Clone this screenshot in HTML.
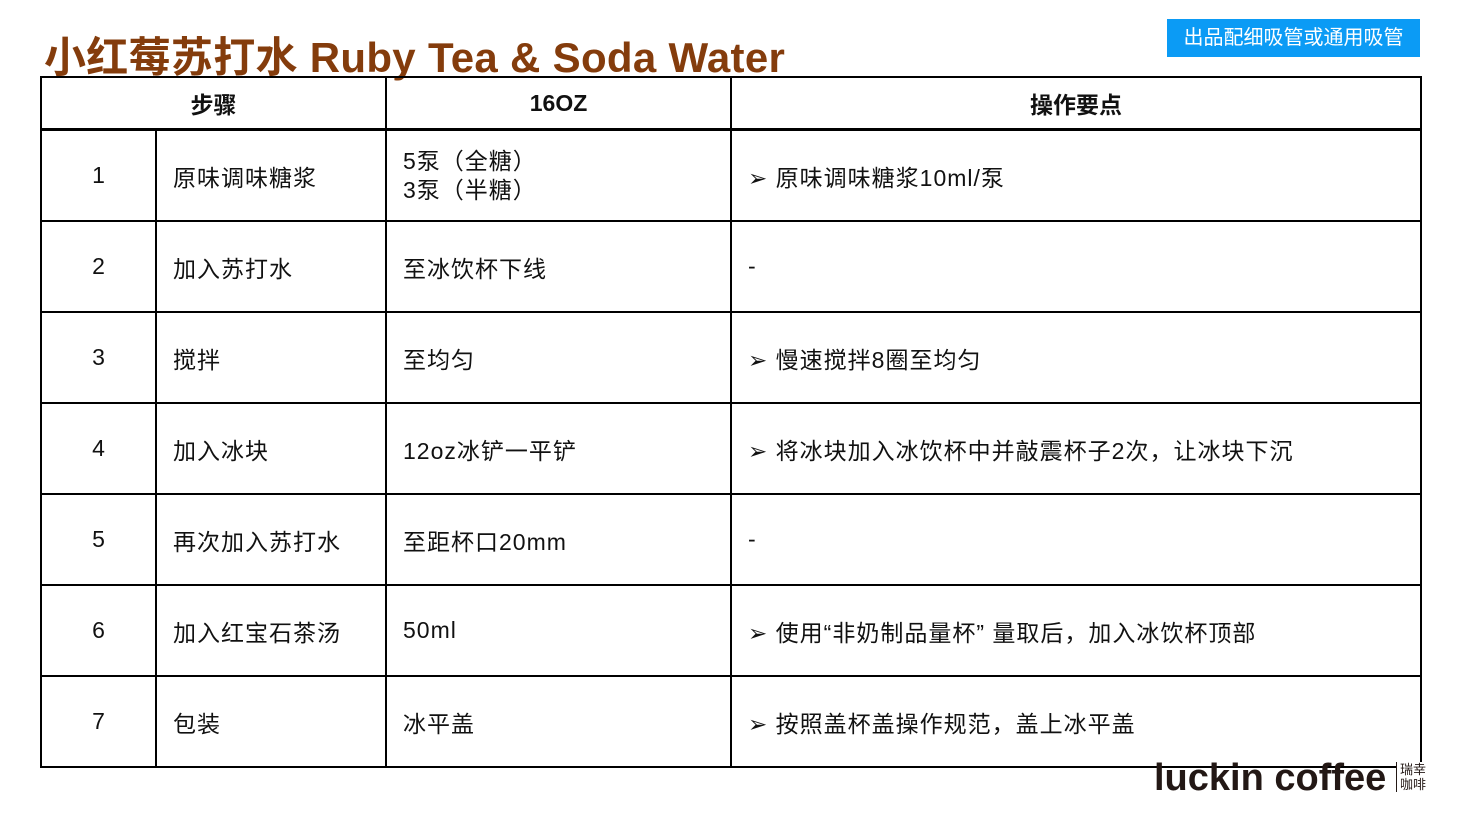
<!DOCTYPE html>
<html><head><meta charset="utf-8"><style>
body{margin:0;width:1460px;height:821px;background:#fff;position:relative;overflow:hidden;font-family:"Liberation Sans","Noto Sans CJK SC",sans-serif;}
.title{position:absolute;left:44px;top:24px;font-size:42px;font-weight:bold;color:#843C0C;white-space:nowrap;letter-spacing:0.3px}
.btn{position:absolute;left:1167px;top:19px;width:253px;height:38px;background:#0B9BF5;color:#fff;font-size:20px;line-height:38px;text-align:center}
table{position:absolute;left:40px;top:76px;border-collapse:collapse;table-layout:fixed}
td,th{border:2px solid #000;font-size:23px;color:#111;padding:0}
th{height:50px;font-weight:bold;text-align:center}
tr.h th{border-bottom:3px solid #000}
td{height:89px}
td.n{text-align:center}
td.p{padding-left:16px;letter-spacing:1px}
.logo{position:absolute;left:1152px;top:758px;font-size:38px;font-weight:bold;color:#231815;line-height:40px;padding:0 2px}
.sm{position:absolute;left:1396px;top:762px;font-size:13px;line-height:15px;color:#231815;background:#fff;border-left:1px solid #231815;padding-left:3px}
</style></head><body>
<div class="title">小红莓苏打水 Ruby Tea &amp; Soda Water</div>
<div class="btn">出品配细吸管或通用吸管</div>
<table>
<colgroup><col style="width:115px"><col style="width:230px"><col style="width:345px"><col style="width:690px"></colgroup>
<tr class="h"><th colspan="2">步骤</th><th>16OZ</th><th>操作要点</th></tr>
<tr><td class="n">1</td><td class="p">原味调味糖浆</td><td class="p" style="line-height:29px">5泵（全糖）<br>3泵（半糖）</td><td class="p">➢ 原味调味糖浆10ml/泵</td></tr>
<tr><td class="n">2</td><td class="p">加入苏打水</td><td class="p">至冰饮杯下线</td><td class="p">-</td></tr>
<tr><td class="n">3</td><td class="p">搅拌</td><td class="p">至均匀</td><td class="p">➢ 慢速搅拌8圈至均匀</td></tr>
<tr><td class="n">4</td><td class="p">加入冰块</td><td class="p">12oz冰铲一平铲</td><td class="p">➢ 将冰块加入冰饮杯中并敲震杯子2次，让冰块下沉</td></tr>
<tr><td class="n">5</td><td class="p">再次加入苏打水</td><td class="p">至距杯口20mm</td><td class="p">-</td></tr>
<tr><td class="n">6</td><td class="p">加入红宝石茶汤</td><td class="p">50ml</td><td class="p">➢ 使用“非奶制品量杯” 量取后，加入冰饮杯顶部</td></tr>
<tr><td class="n">7</td><td class="p">包装</td><td class="p">冰平盖</td><td class="p">➢ 按照盖杯盖操作规范，盖上冰平盖</td></tr>
</table>
<div class="logo">luckin coffee</div>
<div class="sm">瑞幸<br>咖啡</div>
</body></html>
